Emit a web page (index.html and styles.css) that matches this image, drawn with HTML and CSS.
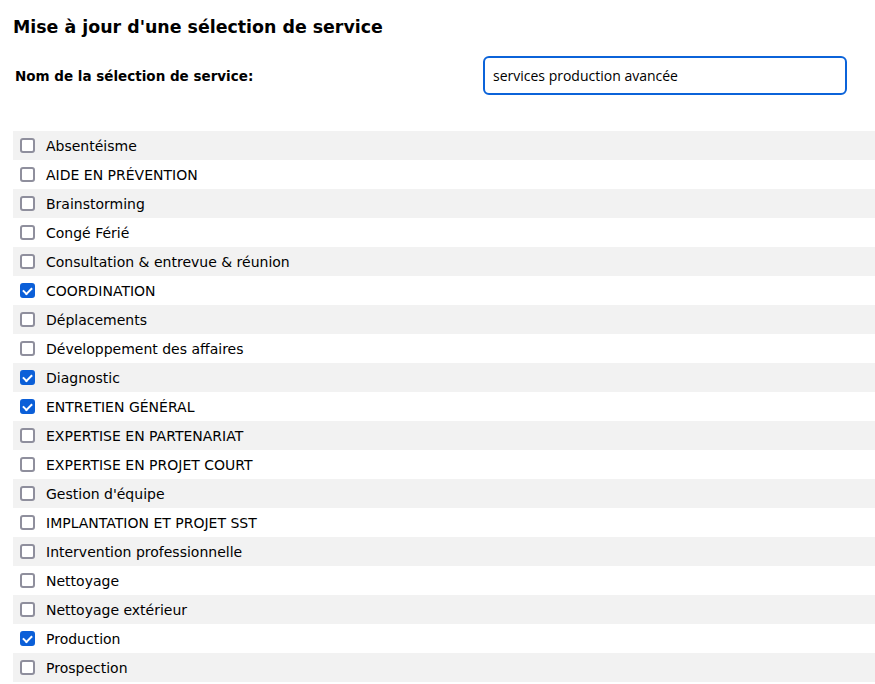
FILE: index.html
```html
<!DOCTYPE html>
<html lang="fr">
<head>
  <meta charset="UTF-8">
  <meta name="viewport" content="width=device-width, initial-scale=1.0">
  <title>Mise à jour d'une sélection de service</title>
  <link rel="stylesheet" href="styles.css">
</head>
<body>
  <h1>Mise à jour d'une sélection de service</h1>

  <div class="name-row">
    <label for="nom" class="name-label">Nom de la sélection de service:</label>
    <input type="text" id="nom" class="name-input" value="services production avancée">
  </div>

  <ul class="services">
    <li><label><input type="checkbox"> Absentéisme</label></li>
    <li><label><input type="checkbox"> AIDE EN PRÉVENTION</label></li>
    <li><label><input type="checkbox"> Brainstorming</label></li>
    <li><label><input type="checkbox"> Congé Férié</label></li>
    <li><label><input type="checkbox"> Consultation &amp; entrevue &amp; réunion</label></li>
    <li><label><input type="checkbox" checked> COORDINATION</label></li>
    <li><label><input type="checkbox"> Déplacements</label></li>
    <li><label><input type="checkbox"> Développement des affaires</label></li>
    <li><label><input type="checkbox" checked> Diagnostic</label></li>
    <li><label><input type="checkbox" checked> ENTRETIEN GÉNÉRAL</label></li>
    <li><label><input type="checkbox"> EXPERTISE EN PARTENARIAT</label></li>
    <li><label><input type="checkbox"> EXPERTISE EN PROJET COURT</label></li>
    <li><label><input type="checkbox"> Gestion d'équipe</label></li>
    <li><label><input type="checkbox"> IMPLANTATION ET PROJET SST</label></li>
    <li><label><input type="checkbox"> Intervention professionnelle</label></li>
    <li><label><input type="checkbox"> Nettoyage</label></li>
    <li><label><input type="checkbox"> Nettoyage extérieur</label></li>
    <li><label><input type="checkbox" checked> Production</label></li>
    <li><label><input type="checkbox"> Prospection</label></li>
  </ul>
</body>
</html>
```

FILE: styles.css
```css
body {
  font-family: "DejaVu Sans", Verdana, sans-serif;
  font-size: 14px;
  color: #000;
  margin: 0;
  padding: 0 0 0 13px;
}
h1 {
  font-size: 17.4px;
  font-weight: bold;
  margin: 0;
  padding-top: 17px;
  height: 23px;
}
.name-row {
  display: flex;
  align-items: center;
  margin-top: 16px;
  height: 39px;
}
.name-label {
  font-weight: bold;
  font-size: 13.5px;
  padding-left: 2px;
  width: 468px;
}
.name-input {
  box-sizing: border-box;
  width: 364px;
  height: 39px;
  border: 2px solid #0b63d9;
  border-radius: 6px;
  padding: 0 8px;
  font-family: "Open Sans", "Noto Sans", sans-serif;
  font-size: 14px;
  outline: none;
}
.services {
  list-style: none;
  margin: 36px 0 0;
  padding: 0;
}
.services li {
  height: 29px;
  display: flex;
  align-items: center;
}
.services li:nth-child(odd) { background: #f2f2f2; }
.services label {
  display: flex;
  align-items: center;
  cursor: pointer;
}
.services input[type="checkbox"] {
  appearance: none;
  box-sizing: border-box;
  width: 15px;
  height: 15px;
  margin: 0 11px 0 7px;
  border: 2px solid #8f8f9d;
  border-radius: 3px;
  background: #fff;
  display: flex;
  align-items: center;
  justify-content: center;
}
.services input[type="checkbox"]:checked {
  background: #0b5fd8;
  border-color: #0b5fd8;
}
.services input[type="checkbox"]:checked::after {
  content: "";
  width: 7px;
  height: 4px;
  border-left: 2px solid #fff;
  border-bottom: 2px solid #fff;
  transform: translateY(-1px) rotate(-45deg);
}
```
